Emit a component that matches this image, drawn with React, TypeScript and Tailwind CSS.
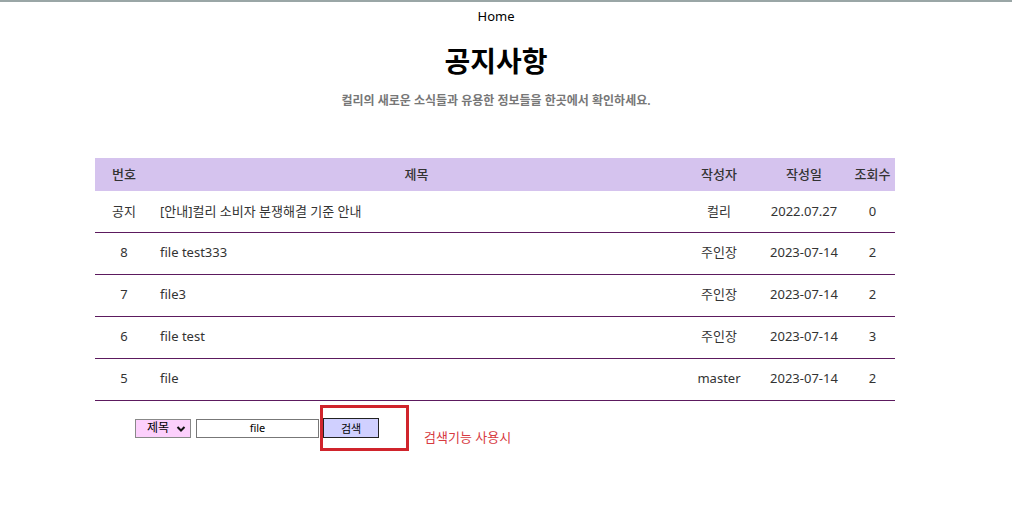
import React from "react";

const rows = [
  { no: "공지", title: "[안내]컬리 소비자 분쟁해결 기준 안내", writer: "컬리", date: "2022.07.27", hit: "0" },
  { no: "8", title: "file test333", writer: "주인장", date: "2023-07-14", hit: "2" },
  { no: "7", title: "file3", writer: "주인장", date: "2023-07-14", hit: "2" },
  { no: "6", title: "file test", writer: "주인장", date: "2023-07-14", hit: "3" },
  { no: "5", title: "file", writer: "master", date: "2023-07-14", hit: "2" },
];

export default function App() {
  return (
    <div
      className="w-[1012px] h-[511px] bg-white border-t-2 border-[#9aa6a6] text-[#333]"
      style={{ fontFamily: '"Noto Sans", "Noto Sans CJK KR", sans-serif' }}
    >
      <div className="w-[992px]">
        <div className="flex justify-center pt-[5px] h-[24px] text-[13px] leading-[18px] text-black">Home</div>
        <h1 className="text-center text-[28px] font-bold leading-[36px] mt-[17px] text-black">공지사항</h1>
        <p className="text-center text-[12px] font-semibold text-[#777] mt-[14px] leading-[16px]">
          컬리의 새로운 소식들과 유용한 정보들을 한곳에서 확인하세요.
        </p>
        <div className="ml-[95px] mt-[49px] w-[800px]">
          <table className="w-[800px] table-fixed border-collapse text-[13px]">
            <colgroup>
              <col className="w-[58px]" />
              <col className="w-[527px]" />
              <col className="w-[78px]" />
              <col className="w-[92px]" />
              <col className="w-[45px]" />
            </colgroup>
            <thead>
              <tr className="bg-[#d5c3ee] h-[33px]">
                <th className="font-medium text-center">번호</th>
                <th className="font-medium text-center">제목</th>
                <th className="font-medium text-center">작성자</th>
                <th className="font-medium text-center">작성일</th>
                <th className="font-medium text-center whitespace-nowrap">조회수</th>
              </tr>
            </thead>
            <tbody>
              {rows.map((r, i) => (
                <tr key={i} className={`${i === 0 ? "h-[41px]" : "h-[42px]"} border-b border-[#5c1a5e]`}>
                  <td className="text-center">{r.no}</td>
                  <td className="pl-[7px]">{r.title}</td>
                  <td className="text-center">{r.writer}</td>
                  <td className="text-center">{r.date}</td>
                  <td className="text-center">{r.hit}</td>
                </tr>
              ))}
            </tbody>
          </table>
          <div className="relative flex items-start pl-[40px] pt-[17px]">
            <div className="relative mt-[1px] w-[56px] h-[19px] bg-[#fcd0fc] border border-[#888] flex items-center text-[12px] text-black pl-[11px]">
              제목
              <svg className="absolute right-[4px] top-[5px]" width="10" height="8" viewBox="0 0 10 8">
                <path d="M1.5 2 L5 5.5 L8.5 2" stroke="#111" strokeWidth="2" fill="none" />
              </svg>
            </div>
            <div className="ml-[5px] mt-[1px] w-[123px] h-[19px] border border-[#777] flex items-center justify-center text-[11px] text-black">
              file
            </div>
            <div className="ml-[4px] w-[56px] h-[20px] bg-[#d0d0ff] border border-[#222] flex items-center justify-center text-[11px] leading-[14px] pt-[2px] text-black">
              검색
            </div>
            <div className="ml-[45px] mt-[10px] text-[13px] text-[#d73a3f]">검색기능 사용시</div>
            <div className="absolute left-[225px] top-[4px] w-[89px] h-[46px] border-[3px] border-[#d0242c]" />
          </div>
        </div>
      </div>
    </div>
  );
}
